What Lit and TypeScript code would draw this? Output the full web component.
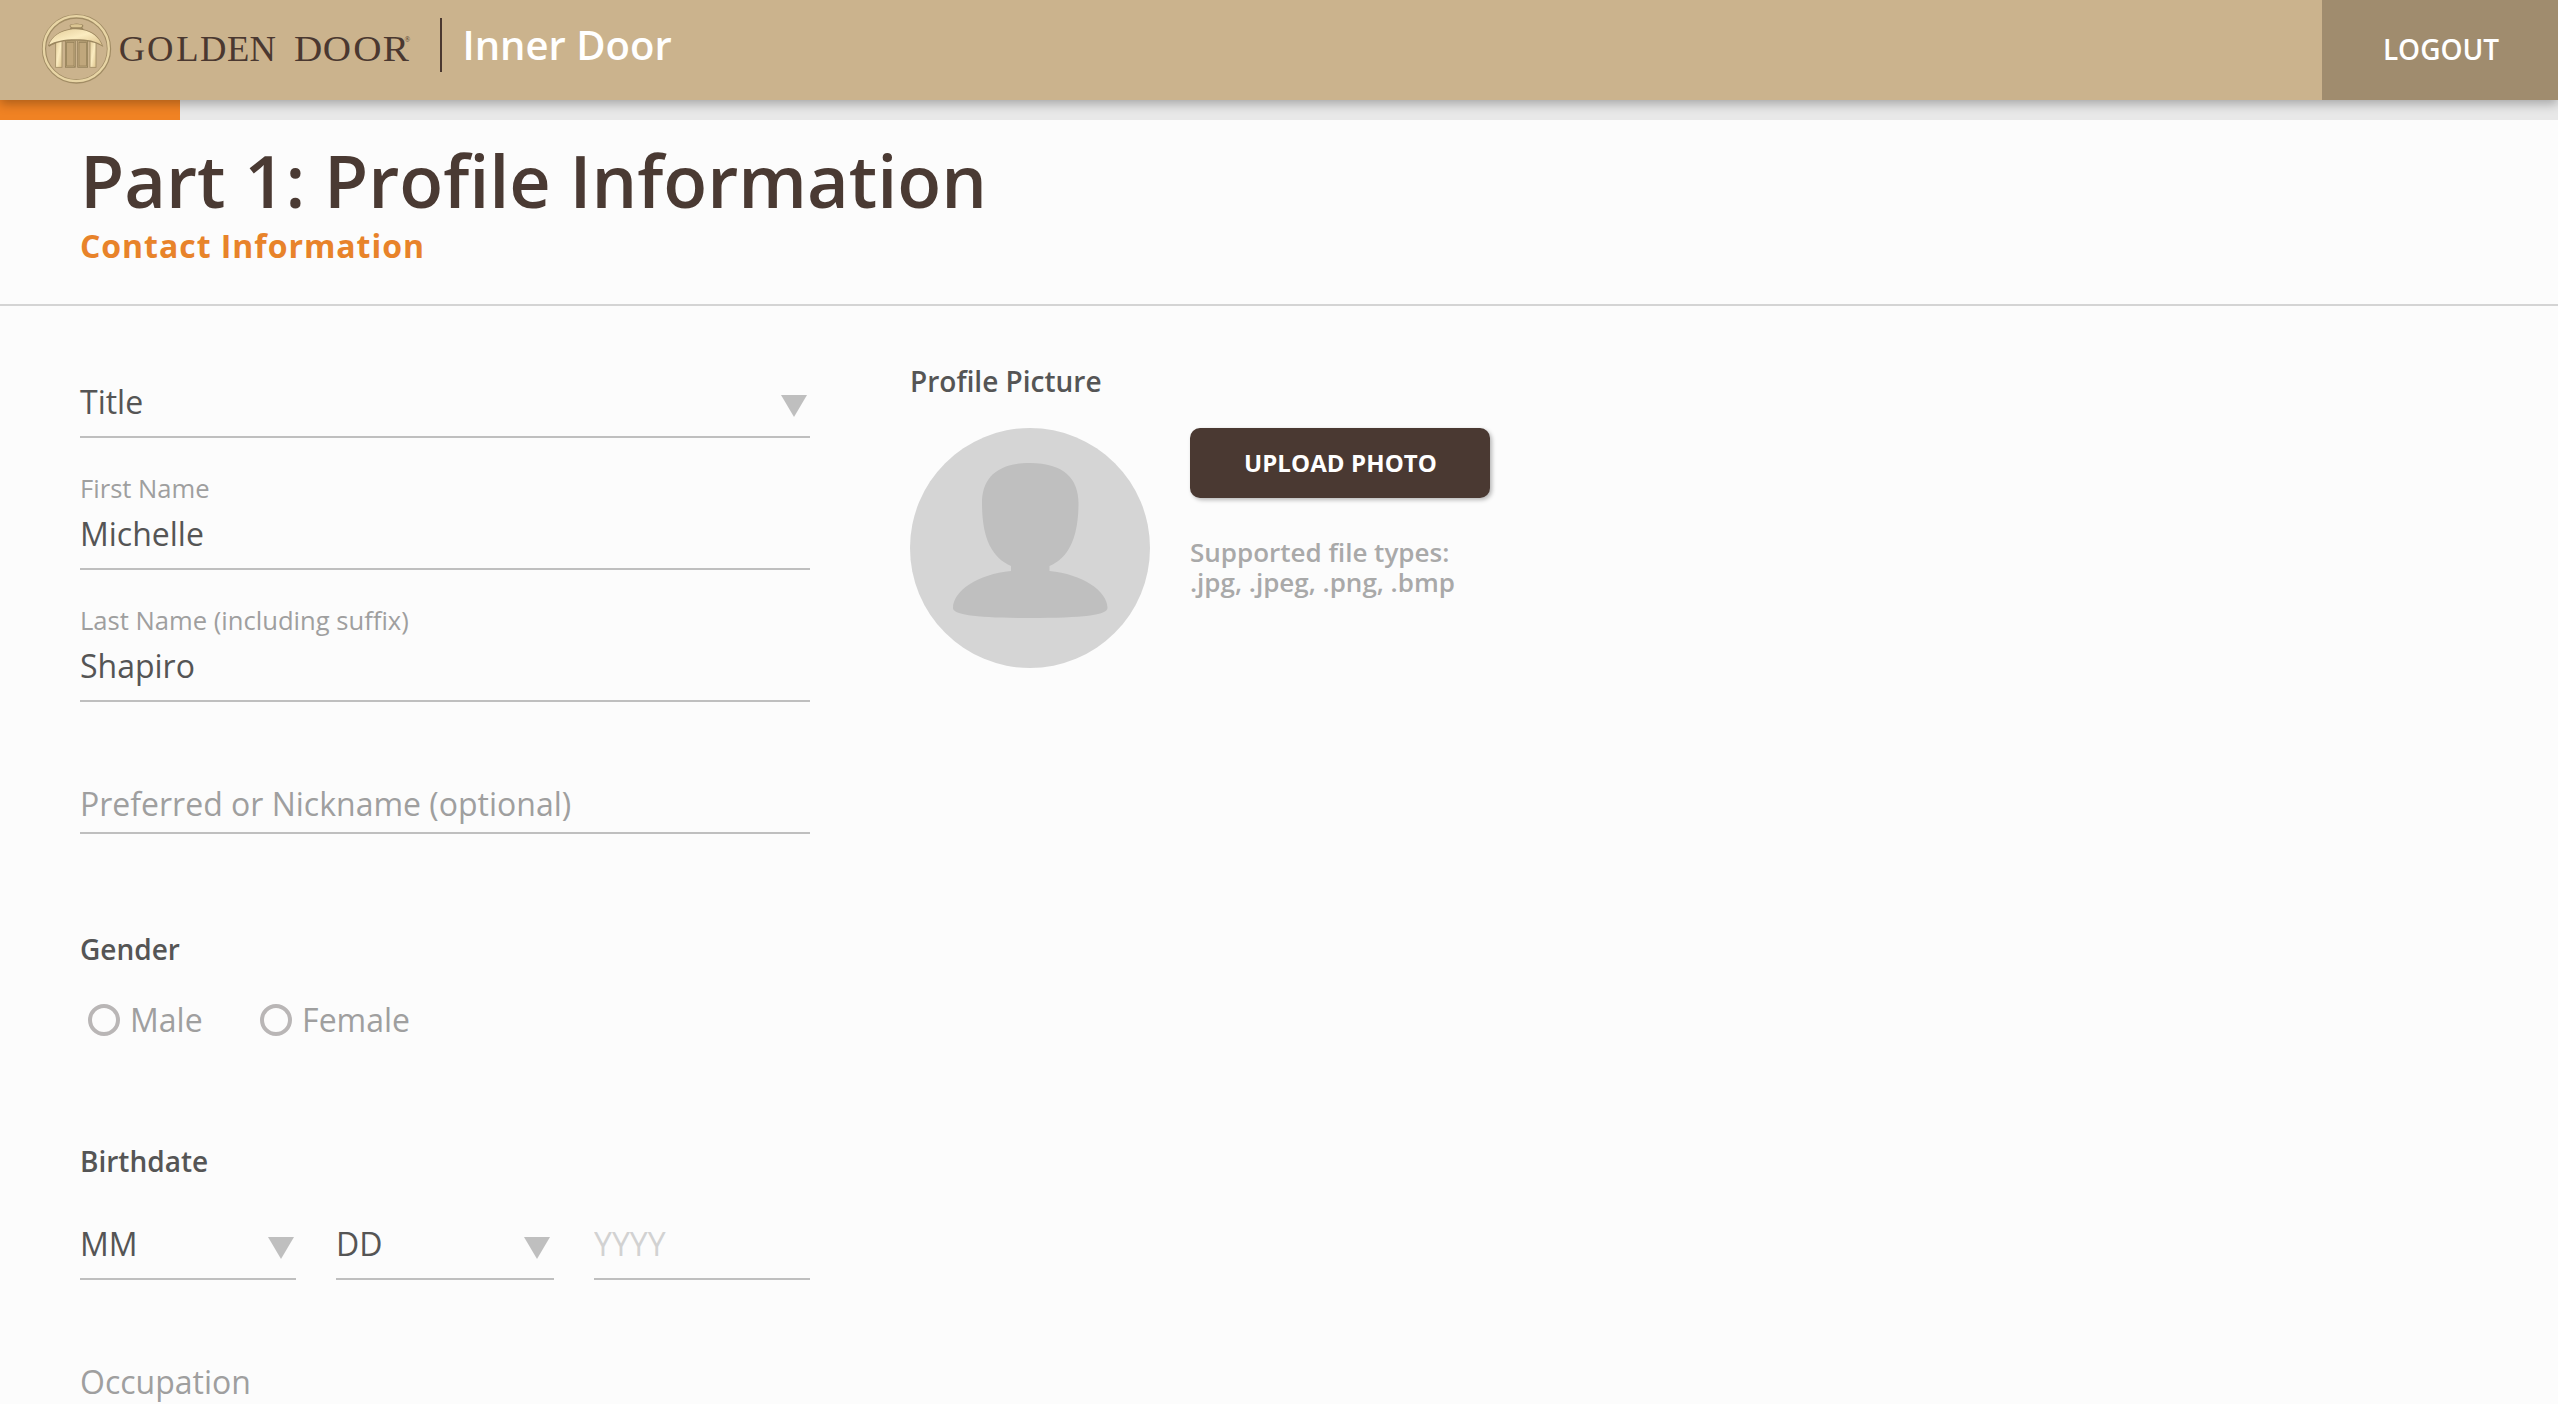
import { LitElement, html, css, svg } from "lit";
import { customElement, property } from "lit/decorators.js";

@customElement("brand-logo")
export class BrandLogo extends LitElement {
  static styles = css`
    :host { display: block; width: 440px; height: 100px; }
    svg { display: block; }
    .wordmark { font-family: "Liberation Serif", serif; font-size: 36.6px; fill: #4a3830; }
    .mark { font-family: "Liberation Serif", serif; font-size: 7.5px; fill: #4a3830; }
  `;
  render() {
    const column = (x: number, w: number) => svg`
      <rect x=${x} y="122" width=${w} height="80" fill="url(#gold)" stroke="#a08b63" stroke-width="2.500"></rect>`;
    const door = (x: number) => svg`
      <rect x=${x} y="125" width="26" height="75" fill="#c0a77c" stroke="#8f7b56" stroke-width="6"></rect>
      <rect x=${x} y="125" width="26" height="75" fill="none" stroke="#cfb887" stroke-width="1.500"></rect>`;
    return html`
      <svg width="440" height="100" viewBox="0 0 440 100">
        <defs>
          <linearGradient id="gold" x1="0" y1="0" x2="1" y2="1">
            <stop offset="0" stop-color="#e2cb98"></stop>
            <stop offset="0.5" stop-color="#fbecc0"></stop>
            <stop offset="1" stop-color="#dcc28c"></stop>
          </linearGradient>
        </defs>
        <g transform="translate(30 0) scale(0.33333)">
          <circle cx="139.500" cy="147" r="97.500" fill="none" stroke="#a18c64" stroke-width="13"></circle>
          <circle cx="139" cy="146" r="97.500" fill="none" stroke="#e8d5a5" stroke-width="7"></circle>
          ${column(77, 19)}
          ${column(180, 18)}
          ${door(108)}
          ${door(145)}
          <path d="M54 137C64 108 92 91 119 87C121 85 121 84 122 82C116 78 119 73 128 73C136 70 144 70 151 73C160 73 163 78 157 82C158 84 159 86 161 88C188 94 210 111 220 141C200 127 175 122 138 122C98 122 76 128 58 140Z"
            fill="#9b865e"></path>
          <path d="M57 134C67 108 92 93 120 89C132 87 146 87 158 90C186 95 207 112 216 136C198 123 172 118 138 118C100 118 76 124 57 134Z"
            fill="url(#gold)"></path>
          <path d="M122 75C130 72 148 72 156 75C158 79 154 80 152 82L126 82C124 80 120 79 122 75Z" fill="#dcc693"></path>
        </g>
        <text class="wordmark" y="61" x="118.800 147 176.200 200 227 249.500">GOLDEN</text>
        <text class="wordmark" transform="translate(294 61) scale(1.07 1)" x="0 26.800 55.300 83">DOOR</text>
        <text class="mark" x="404.500" y="42">®</text>
      </svg>`;
  }
}

@customElement("select-field")
export class SelectField extends LitElement {
  @property() label = "";
  static styles = css`
    :host {
      display: flex; justify-content: space-between; align-items: flex-start; box-sizing: border-box;
      height: 58px; border-bottom: 2px solid #bfbfbf; padding-right: 3px;
      font-size: 32px; line-height: 43px; color: #555;
    }
    svg { display: block; margin-top: 15px; }
  `;
  render() {
    return html`<span>${this.label}</span>
      <svg width="26" height="22" viewBox="0 0 26 22"><path d="M0 0H26L13 22Z" fill="#bfbfbf"></path></svg>`;
  }
}

@customElement("app-root")
export class AppRoot extends LitElement {
  static styles = css`
    :host {
      display: block; height: 100vh; overflow: hidden; background: #fcfcfc;
      font-family: "Open Sans", sans-serif; color: #555;
    }
    h1, h2, h3, p { margin: 0; }
    .header {
      position: relative; z-index: 1; display: flex; height: 100px; background: #cbb38d;
      box-shadow: 0 4px 10px rgba(0, 0, 0, 0.28);
    }
    .divider { width: 2px; height: 54px; margin-top: 18px; background: #4a3830; }
    .product {
      flex: 1; margin: 17px 0 0 20.500px; font-size: 40px; font-weight: 600; line-height: 55px; color: #fff;
    }
    .logout {
      width: 236px; border: 0; padding: 0 0 2px 2px; background: #a08c6e; color: #fff;
      font: 600 28px/38px "Open Sans", sans-serif;
    }
    .progress { height: 20px; background: #e8e8e8; }
    .bar { height: 20px; background: #f08223; }
    .title { height: 184px; padding: 16px 0 0 80px; box-sizing: border-box; }
    .heading { border-bottom: 2px solid #d4d4d4; }
    h1 { font-size: 72px; font-weight: 600; line-height: 88px; color: #4a3a33; }
    h2 { font-size: 32px; font-weight: 700; line-height: 43px; letter-spacing: 0.96px; color: #e8832a; }
    .content { display: grid; grid-template-columns: 730px 1fr; gap: 100px; padding: 0 80px; }
    .form { padding-top: 74px; }
    .field { box-sizing: border-box; height: 100px; margin-top: 32px; border-bottom: 2px solid #bfbfbf; }
    .field label { display: block; padding-top: 1px; font-size: 25.6px; line-height: 36px; margin-bottom: 5px; color: #9f9f9f; }
    input {
      display: block; box-sizing: border-box; width: 100%; height: 43px; border: 0; padding: 0; outline: 0;
      background: transparent; font: 32px/43px "Open Sans", sans-serif; color: #555;
    }
    input::placeholder { color: #9f9f9f; opacity: 1; }
    .empty { padding-top: 48px; }
    h3 { font-size: 28px; font-weight: 600; line-height: 38px; color: #555; }
    .gender { margin-top: 96px; }
    .radios { display: flex; gap: 57.5px; margin-top: 30px; padding-left: 8px; }
    .radio { display: flex; gap: 10px; font-size: 32px; line-height: 43px; color: #9f9f9f; }
    .ring { width: 32px; height: 32px; margin-top: 6px; box-sizing: border-box; border: 4px solid #b9b6b6; border-radius: 50%; }
    .birth { margin-top: 101px; }
    .date { display: grid; grid-template-columns: 216px 218px 216px; gap: 40px; margin-top: 42px; }
    .month { padding-right: 2px; }
    .day { padding-right: 4px; }
    .year { box-sizing: border-box; height: 58px; border-bottom: 2px solid #bfbfbf; }
    .year input::placeholder { color: #d2d2d2; }
    .occupation { margin-top: 80px; font-size: 32px; line-height: 43px; color: #9f9f9f; }
    .picture { padding-top: 56px; }
    .photo { display: flex; gap: 40px; margin-top: 28px; }
    .upload {
      display: block; width: 300px; height: 70px; border: 0; border-radius: 10px; padding: 0 0 1px 1px; background: #4a3932;
      color: #fff; font: 700 24px/33px "Open Sans", sans-serif; letter-spacing: 0.1px;
      box-shadow: 2px 2px 4px rgba(0, 0, 0, 0.28);
    }
    .types { margin-top: 39px; font-size: 26px; font-weight: 600; line-height: 30px; color: #a9a9a9; }
    .avatar { display: block; }
  `;
  render() {
    const progress = 180;
    return html`
      <header class="header">
        <brand-logo></brand-logo>
        <div class="divider"></div>
        <div class="product">Inner Door</div>
        <button class="logout">LOGOUT</button>
      </header>
      <div class="progress"><div class="bar" style="width:${progress}px"></div></div>
      <div class="heading">
        <div class="title">
          <h1>Part 1: Profile Information</h1>
          <h2>Contact Information</h2>
        </div>
      </div>
      <main class="content">
        <section class="form">
          <select-field label="Title"></select-field>
          <div class="field"><label>First Name</label><input .value=${"Michelle"} /></div>
          <div class="field"><label>Last Name (including suffix)</label><input .value=${"Shapiro"} /></div>
          <div class="field empty"><input placeholder="Preferred or Nickname (optional)" /></div>
          <h3 class="gender">Gender</h3>
          <div class="radios">
            <div class="radio"><span class="ring"></span>Male</div>
            <div class="radio"><span class="ring"></span>Female</div>
          </div>
          <h3 class="birth">Birthdate</h3>
          <div class="date">
            <select-field class="month" label="MM"></select-field>
            <select-field class="day" label="DD"></select-field>
            <div class="year"><input placeholder="YYYY" /></div>
          </div>
          <div class="occupation">Occupation</div>
        </section>
        <section class="picture">
          <h3>Profile Picture</h3>
          <div class="photo">
            <svg class="avatar" width="240" height="240" viewBox="0 0 240 240">
              <circle cx="120" cy="120" r="120" fill="#d5d5d5"></circle>
              <path d="M120 35C154 35 168.500 51 168.500 75C168.500 109 159 130 139.500 138V143C172 146 197.500 163 197.500 180C197.500 187 173 190 120 190C67 190 43 187 43 180C43 163 68 146 101 143V138C81 129 72 109 72 75C72 51 86 35 120 35Z"
                fill="#bfbfbf"></path>
            </svg>
            <div>
              <button class="upload">UPLOAD PHOTO</button>
              <p class="types">Supported file types:<br />.jpg, .jpeg, .png, .bmp</p>
            </div>
          </div>
        </section>
      </main>`;
  }
}
